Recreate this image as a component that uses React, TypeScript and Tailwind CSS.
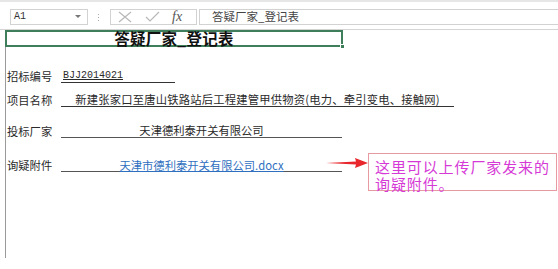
import React from "react";

const cjk = "'Noto Sans CJK SC', 'Noto Sans', sans-serif";

export default function App() {
  return (
    <div
      className="relative w-[558px] h-[269px] bg-white overflow-hidden text-[#222]"
      style={{ fontFamily: cjk }}
    >
      {/* top strip */}
      <div className="h-[2px] bg-[#e6e6e6]" />
      {/* formula bar */}
      <div className="mt-[7px] flex items-center h-[16px]">
        <div className="ml-[10px] w-[78px] h-[16px] border border-[#d2d2d2] flex items-center justify-between pl-[3px] pr-[6px]">
          <span className="text-[10px] leading-none text-[#333]" style={{ fontFamily: "'Liberation Mono', monospace" }}>A1</span>
          <svg width="6" height="4" viewBox="0 0 6 4"><path d="M0 0 L6 0 L3 3 Z" fill="#777" /></svg>
        </div>
        <div className="ml-[9px] w-[2px] flex flex-col gap-[2px] items-center">
          <div className="w-[1px] h-[1px] bg-[#aaa]" />
          <div className="w-[1px] h-[1px] bg-[#aaa]" />
          <div className="w-[1px] h-[1px] bg-[#aaa]" />
        </div>
        <div className="ml-[11px] w-[87px] h-[16px] border border-[#d2d2d2] flex items-center pl-[7px]">
          <svg width="14" height="12" viewBox="0 0 14 12"><path d="M1 1 L13 11 M13 1 L1 11" stroke="#b8b8b8" strokeWidth="1.2" fill="none" /></svg>
          <svg className="ml-[13px]" width="15" height="12" viewBox="0 0 15 12"><path d="M1 6 L5 10 L14 1" stroke="#b8b8b8" strokeWidth="1.2" fill="none" /></svg>
          <span className="ml-[12px] text-[14px] leading-none italic text-[#555]" style={{ fontFamily: "'Liberation Serif', serif" }}>fx</span>
        </div>
        <div className="ml-[2px] flex-1 h-[16px] border border-[#d2d2d2] border-r-0 flex items-center pl-[12px]">
          <span className="text-[11.5px] leading-none text-[#444]">答疑厂家_登记表</span>
        </div>
      </div>
      <div className="mt-[4px] h-[1px] bg-[#d4d4d4]" />
      {/* selected title cell */}
      <div className="relative ml-[5px] w-[338px] h-[17px] border-2 border-[#3f7e5a] flex items-center justify-center">
        <span className="text-[15.5px] leading-none font-bold text-[#111] tracking-[0.3px]">答疑厂家_登记表</span>
        <div className="absolute right-[-4px] bottom-[-4px] w-[5px] h-[5px] bg-[#3f7e5a] border border-white" />
      </div>
      {/* sheet body */}
      <div className="ml-[5px] h-[211px] border-l border-[#9a9a9a] text-[11.3px] text-[#2a2a2a]">
        <div className="pt-[23px] flex items-end h-[36px]">
          <span className="ml-[1px] w-[54px] leading-[13px]">招标编号</span>
          <div className="w-[114px] border-b border-[#333] h-[13px] flex items-end pl-[2px]">
            <span className="text-[10px] leading-[12px] underline" style={{ fontFamily: "'Liberation Mono', monospace" }}>BJJ2014021</span>
          </div>
        </div>
        <div className="mt-[11px] flex items-end">
          <span className="ml-[1px] w-[54px] leading-[13px]">项目名称</span>
          <div className="w-[393px] border-b border-[#333] h-[13px] flex items-end justify-center">
            <span className="leading-[13px] tracking-[0.2px]">新建张家口至唐山铁路站后工程建管甲供物资(电力、牵引变电、接触网)</span>
          </div>
        </div>
        <div className="mt-[18px] flex items-end">
          <span className="ml-[1px] w-[54px] leading-[13px]">投标厂家</span>
          <div className="w-[281px] border-b border-[#555] h-[13px] flex items-end justify-center">
            <span className="leading-[13px]">天津德利泰开关有限公司</span>
          </div>
        </div>
        <div className="mt-[21px] flex items-end">
          <span className="ml-[1px] w-[54px] leading-[13px]">询疑附件</span>
          <div className="w-[281px] border-b border-[#555] h-[13px] flex items-end justify-center">
            <span className="leading-[12px] text-[#2f6fc0] underline">天津市德利泰开关有限公司.docx</span>
          </div>
        </div>
      </div>

      {/* annotation arrow */}
      <svg className="absolute left-[326px] top-[157px]" width="43" height="12" viewBox="0 0 43 12">
        <polygon points="0,6 30,4.6 29,1 42,6 29,11 30,7.4" fill="#e8262b" />
      </svg>
      {/* annotation box */}
      <div className="absolute left-[368px] top-[153px] w-[189px] h-[38px] border-[1.5px] border-[#e89aa2] pl-[6px] pt-[4px]">
        <div className="text-[15px] leading-[17px] tracking-[0.9px] text-[#d63ad6]">这里可以上传厂家发来的</div>
        <div className="text-[15px] leading-[17px] tracking-[0.9px] text-[#d63ad6]">询疑附件。</div>
      </div>
    </div>
  );
}
